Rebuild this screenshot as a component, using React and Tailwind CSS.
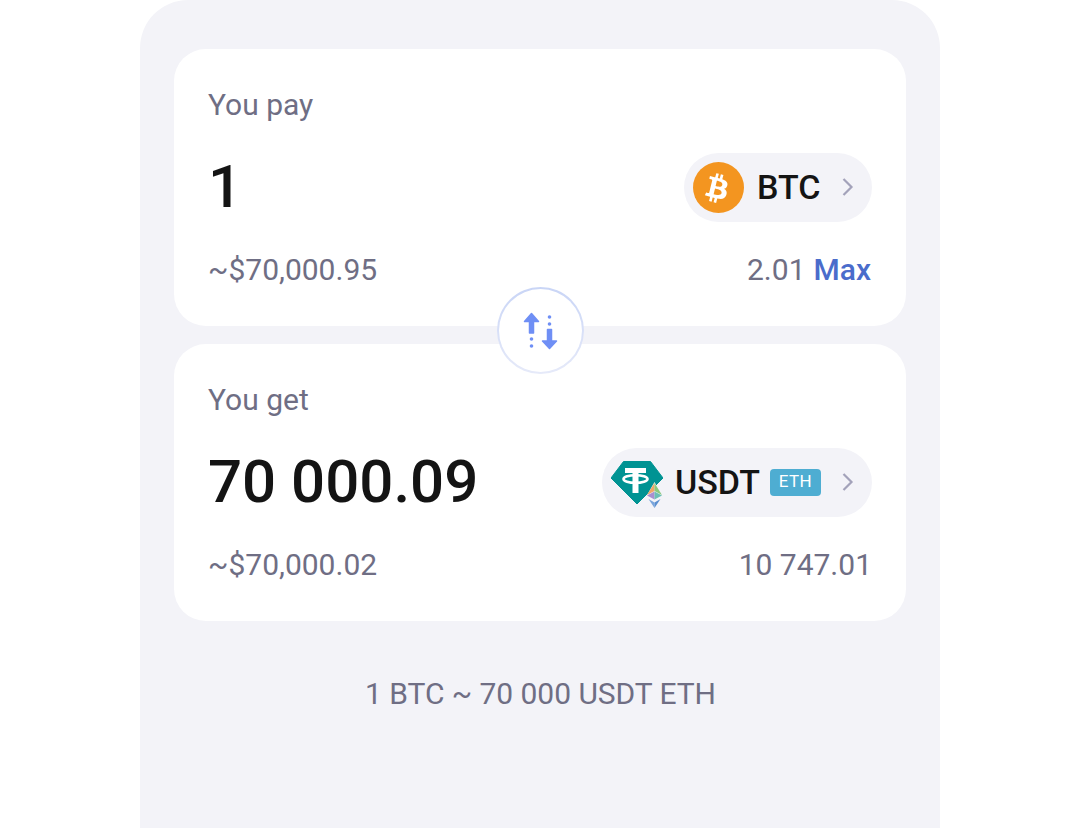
import React from 'react';

const BitcoinIcon = () => (
  <svg width="51" height="51" viewBox="0 0 52 52">
    <circle cx="26" cy="26" r="26" fill="#f39520" />
    <path
      fill="#fff"
      transform="translate(26 26) scale(1.85) translate(-12 -12)"
      d="M16.9 10.6c.3-1.7-1-2.6-2.8-3.2l.6-2.3-1.4-.4-.6 2.3c-.4-.1-.8-.2-1.1-.3l.6-2.3-1.4-.3-.6 2.3c-.3-.1-.6-.1-.9-.2l-2-.5-.4 1.500s1 .2 1 .3c.6.1.7.5.6.8l-.7 2.700-.9 3.700c-.1.2-.3.4-.7.3 0 0-1-.3-1-.3l-.7 1.600 1.900.5c.4.1.7.2 1 .3l-.6 2.400 1.400.3.6-2.300c.4.1.8.2 1.100.3l-.6 2.300 1.400.4.6-2.400c2.400.5 4.200.3 5-1.900.6-1.800 0-2.800-1.300-3.500.9-.2 1.700-.8 1.900-2.100zm-3.200 4.500c-.4 1.800-3.400.8-4.400.6l.8-3.100c1 .2 4 .7 3.600 2.500zm.4-4.500c-.4 1.600-2.900.8-3.700.6l.7-2.900c.8.2 3.400.6 3 2.300z"
    />
  </svg>
);

const TetherIcon = () => (
  <svg className="mt-[6px]" width="52" height="48" viewBox="0 0 52 48">
    <path d="M12.500 0.500h27L52 17 26 43 0 17z" fill="#009393" stroke="#009393" strokeLinejoin="round" />
    <path d="M14 7h21v5h-7.500v20h-6V12H14z" fill="#fff" />
    <ellipse cx="24.500" cy="18" rx="12" ry="3.800" fill="none" stroke="#fff" strokeWidth="2.600" />
    <path d="M43.500 21L35.500 35l8 5 8-5z" fill="#f3f3f8" />
    <path d="M43.500 22L36 34l7.500-4z" fill="#f0a667" />
    <path d="M43.500 22L51 34l-7.500-4z" fill="#8cc97c" />
    <path d="M36 34.500l7.500-4v8z" fill="#a98fd0" />
    <path d="M51 34.500l-7.500-4v8z" fill="#6cc0b4" />
    <path d="M37.500 38l6 3.500V47z" fill="#7aa5dc" />
    <path d="M49.500 38l-6 3.500V47z" fill="#5b8fd0" />
  </svg>
);

const SwapIcon = () => (
  <svg width="36" height="38" viewBox="0 0 36 38" fill="#6f8ff5" stroke="#6f8ff5" strokeLinejoin="round">
    <path d="M8.500 1.500L1.500 9.500h5V21h4V9.500h5z" strokeWidth="1.500" />
    <circle cx="8.500" cy="27" r="1.800" stroke="none" />
    <circle cx="8.500" cy="34" r="1.800" stroke="none" />
    <circle cx="26.500" cy="5" r="1.800" stroke="none" />
    <circle cx="26.500" cy="12" r="1.800" stroke="none" />
    <path d="M24.500 17.500V29h-5l7 7.500 7-7.500h-5V17.500z" strokeWidth="1.500" />
  </svg>
);

const Chevron = () => (
  <svg width="12" height="20" viewBox="0 0 12 20" fill="none" stroke="#a3a2ba" strokeWidth="2.2">
    <path d="M1.500 2l8 8-8 8" />
  </svg>
);

const SwapCard = ({ label, value, usd, balance, pill, max }) => (
  <div className="h-[277px] rounded-[32px] bg-white px-[34px] pt-[38px]">
    <div className="text-[30px] leading-[36px] text-[#6f6e84]">{label}</div>
    <div className="mt-[29px] flex h-[70px] items-center justify-between">
      <div className="text-[60px] font-medium leading-[70px] text-[#141414]">{value}</div>
      {pill}
    </div>
    <div className="mt-[30px] flex justify-between text-[30px] leading-[36px] text-[#6f6e84]">
      <span>{usd}</span>
      <span>
        {balance}
        {max && <span className="ml-[8px] mr-[1px] font-medium text-[#4a6ccb]">Max</span>}
      </span>
    </div>
  </div>
);

export default function App() {
  return (
    <div className="h-[828px] overflow-hidden bg-white font-['Roboto',sans-serif] antialiased">
      <div className="relative mx-auto h-[828px] w-[800px] rounded-t-[48px] bg-[#f3f3f8] px-[34px] pt-[49px]">
        <div className="flex flex-col gap-[18px]">
          <SwapCard
            label="You pay"
            value="1"
            usd="~$70,000.95"
            balance="2.01"
            max
            pill={
              <div className="flex h-[69px] w-[188px] items-center rounded-full bg-[#f3f3f8] pl-[9px]">
                <BitcoinIcon />
                <span className="ml-[13px] text-[34px] font-medium text-[#141414]">BTC</span>
                <span className="ml-[22px] flex"><Chevron /></span>
              </div>
            }
          />
          <SwapCard
            label="You get"
            value="70 000.09"
            usd="~$70,000.02"
            balance="10 747.01"
            pill={
              <div className="flex h-[69px] w-[270px] items-center rounded-full bg-[#f3f3f8] pl-[9px]">
                <TetherIcon />
                <span className="ml-[12px] text-[34px] font-medium text-[#141414]">USDT</span>
                <span className="ml-[10px] flex h-[27px] w-[51px] items-center justify-center rounded-[4px] bg-[#4eadd2] text-[17px] tracking-[0.5px] text-white">ETH</span>
                <span className="ml-[21px] flex"><Chevron /></span>
              </div>
            }
          />
        </div>
        <div className="mt-[53px] pl-[1px] text-center text-[30px] leading-[40px] tracking-[-0.05px] text-[#6f6e84]">1 BTC ~ 70 000 USDT ETH</div>
        <div className="absolute left-[357px] top-[287px] h-[87px] w-[87px] rounded-full bg-gradient-to-b from-[#c9d5f6] to-[#e6eaf9] p-[2px]">
          <div className="flex h-full w-full items-center justify-center rounded-full bg-white">
            <SwapIcon />
          </div>
        </div>
      </div>
    </div>
  );
}
